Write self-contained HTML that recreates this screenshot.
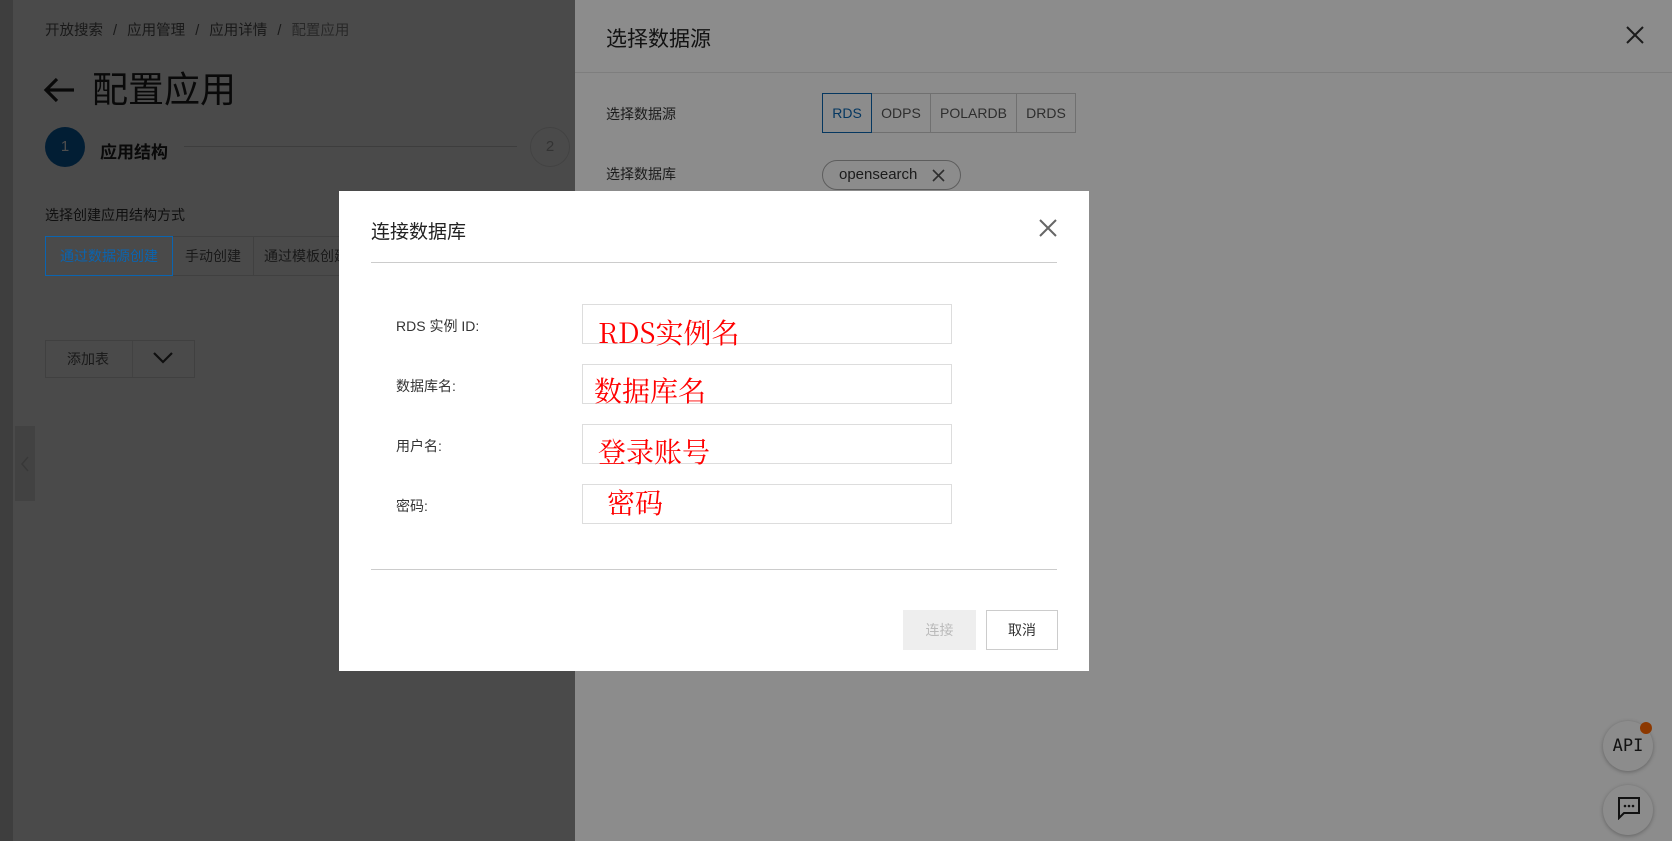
<!DOCTYPE html>
<html><head><meta charset="utf-8"><style>
*{margin:0;padding:0;box-sizing:border-box}
body{width:1672px;height:841px;overflow:hidden;position:relative;background:#f7f7f7;font-family:"Liberation Sans","Noto Sans CJK SC",sans-serif;color:#333}
.a{position:absolute;white-space:nowrap}
.btn{position:absolute;border:1px solid #ccc;background:#fff;font-size:14px;color:#555;display:flex;align-items:center;justify-content:center}
.lb{background:transparent;border-color:#d6d6d6}
.mask{position:absolute;background:rgba(0,0,0,.45)}
.lab{position:absolute;left:396px;font-size:14px;color:#333}
.inp{position:absolute;left:582px;width:370px;height:40px;border:1px solid #ddd;background:#fff}
.red{position:absolute;color:#f00;font-family:"Noto Serif CJK SC","Liberation Serif",serif;font-size:28px;line-height:1}
</style></head><body>
<!-- left page -->
<div class="a" style="left:0;top:0;width:13px;height:841px;background:#d0d0d0"></div>
<div class="a" style="left:45px;top:19px;font-size:14.5px;color:#555;word-spacing:1px">开放搜索 &nbsp;/&nbsp; 应用管理 &nbsp;/&nbsp; 应用详情 &nbsp;/&nbsp; <span style="color:#888">配置应用</span></div>
<div class="a" style="left:42px;top:61px;font-size:36px;color:#222">
<svg width="34" height="30" viewBox="0 0 34 30" style="vertical-align:-3px;margin-right:16px"><path d="M32 15H4M15 4L4 15l11 11" stroke="#222" stroke-width="3.2" fill="none"/></svg>配置应用</div>
<div class="a" style="left:45px;top:127px;width:40px;height:40px;border-radius:50%;background:#0a64b0;color:#fff;font-size:15px;text-align:center;line-height:40px">1</div>
<div class="a" style="left:100px;top:138px;font-size:17px;font-weight:bold;color:#222">应用结构</div>
<div class="a" style="left:184px;top:146px;width:333px;height:1px;background:#ccc"></div>
<div class="a" style="left:530px;top:127px;width:40px;height:40px;border-radius:50%;border:1px solid #ddd;color:#aaa;font-size:15px;text-align:center;line-height:38px">2</div>
<div class="a" style="left:45px;top:205px;font-size:14px;color:#333">选择创建应用结构方式</div>
<div class="btn lb" style="left:172px;top:236px;width:82px;height:40px">手动创建</div>
<div class="btn lb" style="left:253px;top:236px;width:110px;height:40px;justify-content:flex-start;padding-left:10px">通过模板创建</div>
<div class="btn lb" style="left:45px;top:236px;width:128px;height:40px;border-color:#0a64b0;color:#0a64b0;z-index:1">通过数据源创建</div>
<div class="btn lb" style="left:45px;top:340px;width:150px;height:38px;justify-content:flex-start;padding-left:21px">添加表</div>
<div class="a" style="left:132px;top:341px;width:1px;height:36px;background:#ddd"></div>
<svg class="a" style="left:152px;top:351px" width="22" height="14"><path d="M2 2l9 9 9-9" stroke="#333" stroke-width="2.2" fill="none"/></svg>
<div class="a" style="left:15px;top:426px;width:20px;height:75px;background:#ddd"></div>
<svg class="a" style="left:20px;top:456px" width="10" height="16"><path d="M8 1L2 8l6 7" stroke="#bbb" stroke-width="1.5" fill="none"/></svg>
<div class="mask" style="left:0;top:0;width:575px;height:841px"></div>
<!-- drawer -->
<div class="a" style="left:575px;top:0;width:1097px;height:841px;background:#fff"></div>
<div class="a" style="left:575px;top:72px;width:1097px;height:1px;background:#e6e6e6"></div>
<div class="a" style="left:606px;top:23px;font-size:21px;color:#222">选择数据源</div>
<svg class="a" style="left:1625px;top:25px" width="20" height="20"><path d="M2 2l16 16M18 2L2 18" stroke="#333" stroke-width="2"/></svg>
<div class="a" style="left:606px;top:104px;font-size:14px">选择数据源</div>
<div class="btn" style="left:871px;top:93px;width:60px;height:40px">ODPS</div>
<div class="btn" style="left:930px;top:93px;width:87px;height:40px">POLARDB</div>
<div class="btn" style="left:1016px;top:93px;width:60px;height:40px">DRDS</div>
<div class="btn" style="left:822px;top:93px;width:50px;height:40px;border-color:#0a64b0;color:#0a64b0">RDS</div>
<div class="a" style="left:606px;top:164px;font-size:14px">选择数据库</div>
<div class="a" style="left:822px;top:160px;width:139px;height:30px;border:1px solid #aaa;border-radius:15px;font-size:15px;color:#333;padding-left:16px;line-height:28px">opensearch<svg style="position:absolute;left:109px;top:8px" width="13" height="13"><path d="M1 1l11 11M12 1L1 12" stroke="#555" stroke-width="1.6"/></svg></div>
<div class="a" style="left:1603px;top:721px;width:50px;height:50px;border-radius:50%;background:#fff;box-shadow:0 1px 4px rgba(0,0,0,.3);font-family:'DejaVu Sans Mono',monospace;font-size:17px;text-align:center;line-height:50px;color:#222">API</div>
<div class="a" style="left:1640px;top:722px;width:12px;height:12px;border-radius:50%;background:#f60"></div>
<div class="a" style="left:1603px;top:785px;width:50px;height:50px;border-radius:50%;background:#fff;box-shadow:0 1px 4px rgba(0,0,0,.3)"></div>
<svg class="a" style="left:1617px;top:796px" width="24" height="24"><path d="M2 2h20v15H7l-5 5z" stroke="#222" stroke-width="2" fill="none"/><circle cx="8" cy="10" r="1.3" fill="#222"/><circle cx="12" cy="10" r="1.3" fill="#222"/><circle cx="16" cy="10" r="1.3" fill="#222"/></svg>
<div class="mask" style="left:0;top:0;width:1672px;height:841px"></div>
<!-- modal -->
<div class="a" style="left:339px;top:191px;width:750px;height:480px;background:#fff"></div>
<div class="a" style="left:371px;top:217px;font-size:19px;color:#222">连接数据库</div>
<svg class="a" style="left:1038px;top:218px" width="20" height="20"><path d="M2 2l16 16M18 2L2 18" stroke="#666" stroke-width="2"/></svg>
<div class="a" style="left:371px;top:262px;width:686px;height:1px;background:#ccc"></div>
<div class="lab" style="top:316px">RDS 实例 ID:</div>
<div class="lab" style="top:376px">数据库名:</div>
<div class="lab" style="top:436px">用户名:</div>
<div class="lab" style="top:496px">密码:</div>
<div class="inp" style="top:304px"></div>
<div class="inp" style="top:364px"></div>
<div class="inp" style="top:424px"></div>
<div class="inp" style="top:484px"></div>
<div class="red" style="left:598px;top:318px">RDS实例名</div>
<div class="red" style="left:594px;top:376px">数据库名</div>
<div class="red" style="left:598px;top:437px">登录账号</div>
<div class="red" style="left:607px;top:488px">密码</div>
<div class="a" style="left:371px;top:569px;width:686px;height:1px;background:#ccc"></div>
<div class="btn" style="left:903px;top:610px;width:73px;height:40px;background:#eee;border-color:#eee;color:#bbb">连接</div>
<div class="btn" style="left:986px;top:610px;width:72px;height:40px;color:#333">取消</div>
</body></html>
